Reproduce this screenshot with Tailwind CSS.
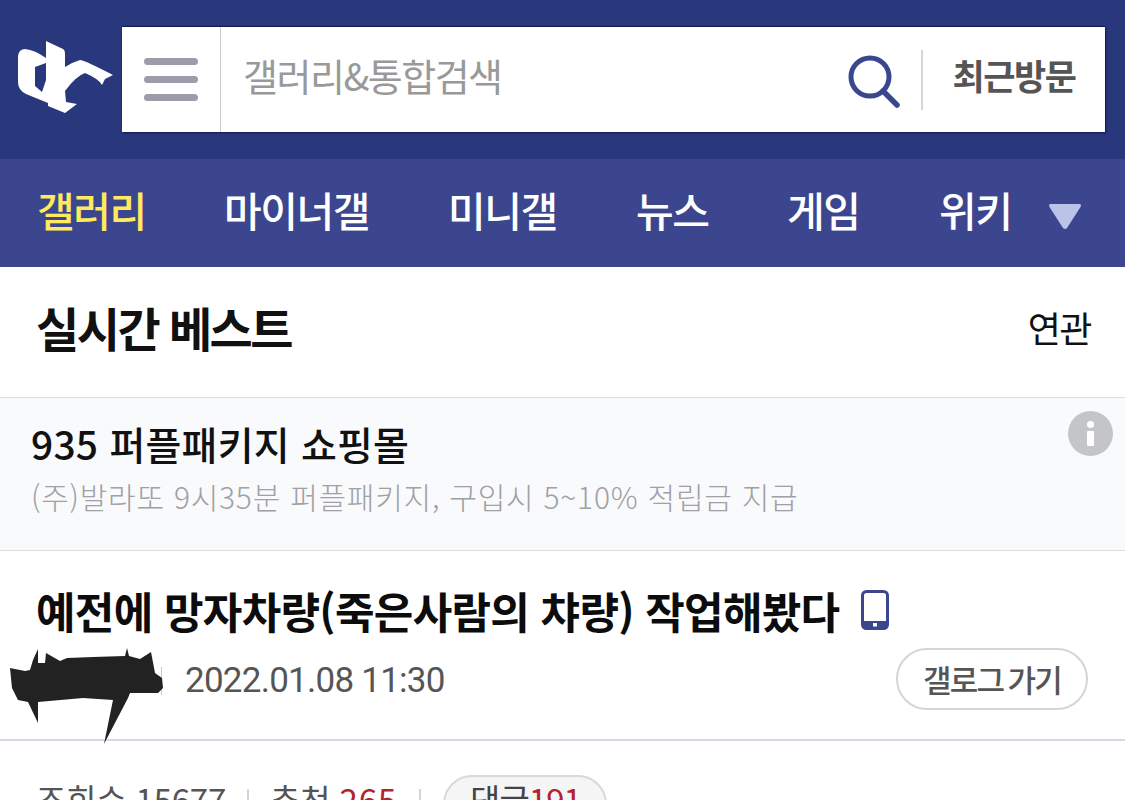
<!DOCTYPE html>
<html lang="ko">
<head>
  <meta charset="UTF-8">
  <meta name="viewport" content="width=device-width, initial-scale=1.0">
  <title>실시간 베스트</title>
  <script src="https://cdn.jsdelivr.net/npm/@tailwindcss/browser@4"></script>
</head>
<body class="bg-white overflow-hidden h-[800px] font-['Noto_Sans_CJK_KR','Noto_Sans',sans-serif]">
  <!-- Search header -->
  <header class="h-[159px] bg-[#29377c] flex pt-[27px] items-start">
    <div class="w-[122px] h-[105px] shrink-0">
      <svg class="w-[122px] h-[105px] overflow-visible" viewBox="0 27 122 105" fill="#fff">
        <path fill-rule="evenodd" d="M46 41 L63 49 Q65 50 65 54 L65 67 Q73 62 80 60 Q84 60 113 75 L105 79 L102 85 Q99 79 85 73 Q76 76 65 91 L66 102 L77 104 L65 113 L48 106 L48 103 L26 94 Q18 90 18 82 L18 56 Q19 49 25 49 Q35 50 46 58 Z M46 63 L35 67 L35 86 L42 92 L46 80 Z"/>
      </svg>
    </div>
    <div class="w-[983px] h-[105px] bg-white flex items-center shadow-[0_-1px_1px_#121a58,1px_1px_2px_#121a58]">
      <button class="w-[99px] h-full border-r border-[#c9cad0] flex flex-col items-center justify-center gap-[11px] shrink-0">
        <span class="block w-[54px] h-[7px] rounded-full bg-[#9c9da9]"></span>
        <span class="block w-[54px] h-[7px] rounded-full bg-[#9c9da9]"></span>
        <span class="block w-[54px] h-[7px] rounded-full bg-[#9c9da9]"></span>
      </button>
      <div class="flex-1 pl-[22px] pb-[10px] text-[38px] tracking-[-1.5px] text-[#999]">갤러리&amp;통합검색</div>
      <svg class="w-[54px] h-[56px] mr-[19px] mt-[4px]" viewBox="0 0 54 56" fill="none" stroke="#3a478f">
        <circle cx="22" cy="23" r="19" stroke-width="5"/>
        <path d="M35 37 L49 51" stroke-width="5.5" stroke-linecap="round"/>
      </svg>
      <div class="w-[2px] h-[60px] bg-[#d5d5d9]"></div>
      <div class="w-[182px] pb-[8px] text-center text-[35px] font-bold tracking-[-1.5px] text-[#555]">최근방문</div>
    </div>
  </header>

  <!-- Category nav -->
  <nav class="h-[108px] bg-[#3b468f] flex items-center pb-[6px] text-[41px] font-medium tracking-[-1.5px] text-white relative">
    <a class="ml-[37px] w-[187px] text-[#ffe95c]">갤러리</a>
    <a class="w-[224px]">마이너갤</a>
    <a class="w-[188px]">미니갤</a>
    <a class="w-[151px]">뉴스</a>
    <a class="w-[152px]">게임</a>
    <a>위키</a>
    <svg class="absolute left-[1048px] top-[43px] w-[34px] h-[28px]" viewBox="0 0 34 28"><path d="M3 2 H31 Q34 2 32.5 5 L19 26 Q17 28 15 26 L1.5 5 Q0 2 3 2 Z" fill="#bcc3e8"/></svg>
  </nav>

  <!-- Title -->
  <section class="h-[131px] flex items-center justify-between pl-[36px] pr-[34px] pb-[10px] border-b border-[#dcdee6]">
    <h1 class="text-[47px] font-bold tracking-[-2.5px] text-[#111]">실시간 베스트</h1>
    <span class="text-[36px] tracking-[-1.5px] text-[#111]">연관</span>
  </section>

  <!-- Ad -->
  <section class="relative h-[153px] bg-[#f9fafc] border-b border-[#dddde0] pl-[31px] pt-[18px]">
    <div class="text-[39px] leading-[55px] font-medium text-[#111] tracking-[0.2px]">935 퍼플패키지 쇼핑몰</div>
    <div class="mt-[2px] text-[30px] leading-[46px] font-light text-[#a0a0a5] tracking-[0.75px]">(주)발라또 9시35분 퍼플패키지, 구입시 5~10% 적립금 지급</div>
    <div class="absolute left-[1068px] top-[13px] w-[45px] h-[45px] rounded-full bg-[#c4c5c9] flex flex-col items-center justify-center gap-[3px]">
      <span class="block w-[7px] h-[7px] rounded-full bg-white"></span>
      <span class="block w-[7px] h-[15px] rounded-[1px] bg-white"></span>
    </div>
  </section>

  <!-- Post header -->
  <section class="relative h-[190px] border-b-2 border-[#d6d8e6]">
    <div class="pl-[36px] pt-[29px] flex items-center">
      <h2 class="text-[43px] leading-[60px] font-bold tracking-[-0.7px] text-[#0c0c0c]">예전에 망자차량(죽은사람의 챠량) 작업해봤다</h2>
      <svg class="ml-[22px] w-[28px] h-[40px]" viewBox="0 0 28 40">
        <rect x="1.5" y="1.5" width="25" height="37" rx="4" fill="#fff" stroke="#3a478f" stroke-width="3"/>
        <path d="M1 31 H27 V35 Q27 39 23 39 H5 Q1 39 1 35 Z" fill="#3a478f"/>
        <rect x="12" y="33" width="4" height="3.5" fill="#fff"/>
      </svg>
    </div>
    <div class="flex items-center pl-[161px] pr-[37px] mt-[8px]">
      <span class="w-[1px] h-[28px] mt-[4px] bg-[#c9cad0] mr-[23px]"></span>
      <span class="mt-[4px] font-['Roboto',sans-serif] text-[35px] tracking-[-0.75px] text-[#555]">2022.01.08 11:30</span>
      <a class="ml-auto w-[192px] h-[62px] rounded-full border-2 border-[#d4d5dc] flex items-center justify-center text-[31px] font-medium tracking-[-1.7px] [word-spacing:-3px] text-[#555]">갤로그 가기</a>
    </div>
    <svg class="absolute left-0 top-[79px] w-[170px] h-[120px]" viewBox="0 630 170 120" fill="#222">
      <path d="M10 668 L25 671 L30 670 L33 660 L38 649 L38 663 L45 663 L46 653 L60 661 L67 658 L93 657 L125 656 L127 648 L129 656 L140 659 L151 652 L155 673 L162 678 L163 688 L158 693 L130 693 L128 698 L104 744 L113 700 L83 698 L38 702 L38 723 L28 702 L18 700 L12 688 Z"/>
    </svg>
  </section>

  <!-- Stats row -->
  <section class="flex items-start pl-[36px] pt-[34px] text-[33px] leading-[48px] text-[#555] tracking-[-0.2px]">
    <span>조회수 15677</span>
    <span class="w-[2px] h-[22px] bg-[#d5d5d9] mx-[21px] mt-[14px]"></span>
    <span>추천 <span class="text-[#b5222c] tracking-[1px]">265</span></span>
    <span class="w-[2px] h-[22px] bg-[#d5d5d9] mx-[22px] mt-[14px]"></span>
    <span class="w-[164px] h-[58px] rounded-full border-2 border-[#d9d9dd] bg-[#f5f5f6] text-[#444] text-center leading-[44px] tracking-[-1px]">댓글<span class="text-[#b5222c]">191</span></span>
  </section>
</body>
</html>
